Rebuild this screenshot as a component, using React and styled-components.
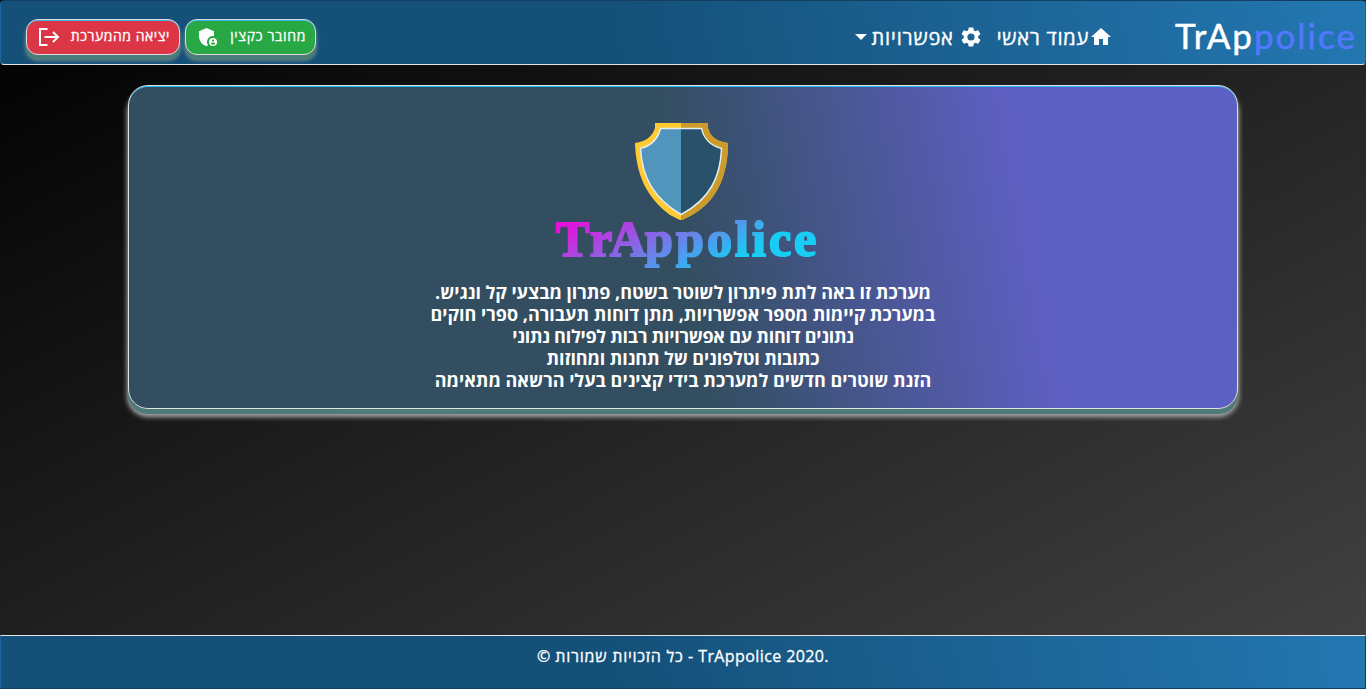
import React from "react";
import styled, { createGlobalStyle } from "styled-components";

const Global = createGlobalStyle`
  * { box-sizing: border-box; }
  html, body { margin: 0; height: 100%; }
  body {
    background: #000;
    color: #fff;
    font-family: "Open Sans", "Liberation Sans", sans-serif;
    overflow: hidden;
  }
`;

const Page = styled.div`
  height: 100vh;
  display: flex;
  flex-direction: column;
  background: linear-gradient(to bottom right, #000, #434343);
`;

const Header = styled.header`
  display: flex;
  justify-content: space-between;
  height: 65px;
  padding: 0 10px 0 25px;
  border: 1px solid #dfe5ea;
  border-top-color: #123f5f;
  border-left-color: #1d659a;
  border-right-color: #1d659a;
  border-radius: 4px;
  background: linear-gradient(80deg, #145078 45%, #2376b0 98%);
`;

const Actions = styled.div`
  display: flex;
  gap: 5px;
  padding-top: 18px;
`;

const ActionButton = styled.button`
  display: flex;
  align-items: center;
  justify-content: space-between;
  width: ${(p) => p.$width}px;
  height: 36px;
  padding: 0 9px 0 ${(p) => p.$left}px;
  border: 1px solid #dcdcdc;
  border-radius: 12px;
  background: ${(p) => p.$color};
  color: #fff;
  box-shadow: inset 0 1px 0 #35b4ec, 0 5px 0 #4d7c78, 0 5px 4px #8b9a9a;
  font: 14px "Open Sans", sans-serif;
`;

const ButtonText = styled.span`
  direction: rtl;
  white-space: nowrap;
  padding-bottom: 3px;
  letter-spacing: ${(p) => p.$spacing || 0}px;
  -webkit-text-stroke: 0.3px #fff;
`;

const Navigation = styled.nav`
  direction: rtl;
  display: flex;
  height: 63px;
`;

const Brand = styled.div`
  direction: ltr;
  width: 180px;
  margin-left: 62px;
  padding-top: 10px;
  font: 35px/48px Lato, sans-serif;
  letter-spacing: 2px;
  white-space: nowrap;
  -webkit-text-stroke: 0.5px currentColor;
  span { color: #5378ff; }
`;

const NavItem = styled.a`
  display: flex;
  align-items: center;
  height: 24px;
  margin-top: 24px;
  margin-left: ${(p) => p.$after || 0}px;
  gap: ${(p) => p.$gap || 0}px;
  font-size: 20px;
  line-height: 24px;
  white-space: nowrap;
  svg { flex: none; }
`;

const NavText = styled.span`
  padding-top: 2px;
  letter-spacing: ${(p) => p.$spacing || 0}px;
  -webkit-text-stroke: 0.4px #fff;
`;

const Caret = styled.span`
  border: 6px solid transparent;
  border-top-color: #fff;
  border-bottom: 0;
`;

const Main = styled.main`
  flex: 1;
  padding: 20px 128px;
`;

const Panel = styled.section`
  display: flex;
  flex-direction: column;
  align-items: center;
  height: 324px;
  padding-top: 33px;
  border: 1px solid #e2e2e2;
  border-radius: 20px;
  background: linear-gradient(80deg, #334e60 50%, #5e5fc2 80%);
  box-shadow: inset 0 1px 0 #26b5f4, 0 5px 0 #4d7c78, 0 7px 5px 1px #aaa;
`;

const Intro = styled.div`
  direction: rtl;
  padding-top: 8px;
  text-align: center;
  font-size: 18px;
  font-weight: 700;
  line-height: 22px;
`;

const Line = styled.div`
  white-space: nowrap;
  letter-spacing: ${(p) => p.$spacing || 0}px;
`;

const Footer = styled.footer`
  height: 54px;
  padding-top: 8px;
  border: 1px solid #e5e5e5;
  border-bottom-color: #123f5f;
  border-left-color: #1d659a;
  border-right-color: #123f5f;
  background: linear-gradient(80deg, #145078 45%, #2376b0 98%);
  text-align: center;
  font-size: 16px;
  line-height: 24px;
  letter-spacing: 0.4px;
  -webkit-text-stroke: 0.3px #fff;
`;

const Rights = styled.bdi`
  letter-spacing: 0.75px;
`;

const Icon = ({ d, size = 24 }) => (
  <svg width={size} height={size} viewBox="0 0 24 24" fill="#fff"><path d={d} fillRule="evenodd" /></svg>
);

const HOME = "M10 20v-6h4v6h5v-8h3L12 3 2 12h3v8z";
const GEAR = "M19.14 12.94c.04-.3.06-.61.06-.94 0-.32-.02-.64-.07-.94l2.03-1.58a.49.49 0 0 0 .12-.61l-1.92-3.32a.49.49 0 0 0-.59-.22l-2.39.96a7 7 0 0 0-1.62-.94l-.36-2.54a.48.48 0 0 0-.48-.41h-3.84a.47.47 0 0 0-.47.41l-.36 2.54c-.59.24-1.13.57-1.62.94l-2.39-.96a.48.48 0 0 0-.59.22L2.74 8.87a.48.48 0 0 0 .12.61l2.03 1.58c-.05.3-.09.63-.09.94s.02.64.07.94l-2.03 1.58a.49.49 0 0 0-.12.61l1.92 3.32c.12.22.37.29.59.22l2.39-.96c.5.38 1.03.7 1.62.94l.36 2.54c.05.24.24.41.48.41h3.84c.24 0 .44-.17.47-.41l.36-2.54a6.8 6.8 0 0 0 1.62-.94l2.39.96c.22.08.47 0 .59-.22l1.92-3.32a.48.48 0 0 0-.12-.61zM12 15.6a3.6 3.6 0 1 1 0-7.2 3.6 3.6 0 0 1 0 7.2z";
const SHIELD = "M17 11c.34 0 .67.04 1 .09V6.27L10.5 3 3 6.27v4.91c0 4.54 3.2 8.79 7.5 9.82.55-.13 1.08-.32 1.6-.55A6 6 0 0 1 17 11zM17 13a4 4 0 1 0 0 8 4 4 0 0 0 0-8zm0 1.38a1.12 1.12 0 1 1 0 2.24 1.12 1.12 0 0 1 0-2.24zm0 5.37c-.93 0-1.74-.46-2.24-1.17.05-.72 1.51-1.08 2.24-1.08s2.19.36 2.24 1.08A2.7 2.7 0 0 1 17 19.75z";

const LogoutIcon = () => (
  <svg width="22" height="20" viewBox="0 0 22 20" fill="none" stroke="#fff" strokeWidth="2">
    <path d="M9.500 2H2v16h7.500M6.500 10H20M15 5l5 5-5 5" />
  </svg>
);

const Logo = () => (
  <svg width="270" height="154" viewBox="548 119 270 154">
    <defs>
      <linearGradient id="word" gradientUnits="userSpaceOnUse" x1="572" y1="222" x2="623" y2="318">
        <stop offset="0" stopColor="#e412da" />
        <stop offset=".5" stopColor="#816de6" />
        <stop offset="1" stopColor="#18ccf3" />
      </linearGradient>
      <clipPath id="right"><path d="M681 119h55v110h-55z" /></clipPath>
    </defs>
    <path d="M655 123h53v5q3 13 20 15c0 29-9 57-36 72l-10 5h-2l-10-5c-24-18-34-41-35-72q16-2 20-15z" fill="#ffca32" />
    <path d="M655 123h53v5q3 13 20 15c0 29-9 57-36 72l-10 5h-2l-10-5c-24-18-34-41-35-72q16-2 20-15z" fill="#cd9b2c" clipPath="url(#right)" />
    <path d="M660.500 128.500h41q3 16 20 20c-1 29-12 51-40.500 66-27-16-39-37-40.500-66q16-4 20-20z" fill="#5195bd" stroke="#e5edf1" strokeWidth="1.500" />
    <path d="M681 129.500h20q4 15 19.500 19.500c-1 27-11 49-39.500 64.500z" fill="#29516b" />
    <text x="556 590 610 645 676 707 735 752 769 794" y="255.500" fontFamily="Liberation Serif, serif" fontWeight="700" fontSize="50" fill="url(#word)" stroke="url(#word)" strokeWidth="2">TrAppolice</text>
  </svg>
);

export default function App() {
  return (
    <>
      <Global />
      <Page>
        <Header>
          <Actions>
            <ActionButton $width={154} $left={11} $color="#dc3545">
              <LogoutIcon /><ButtonText $spacing={0.54}>יציאה מהמערכת</ButtonText>
            </ActionButton>
            <ActionButton $width={131} $left={10} $color="#28a745">
              <Icon d={SHIELD} /><ButtonText $spacing={0.64}>מחובר כקצין</ButtonText>
            </ActionButton>
          </Actions>
          <Navigation>
            <Brand>TrAp<span>police</span></Brand>
            <NavItem $after={14}><Icon d={HOME} /><NavText $spacing={0.78}>עמוד ראשי</NavText></NavItem>
            <NavItem $gap={5}><Icon d={GEAR} /><NavText $spacing={0.85}>אפשרויות</NavText><Caret /></NavItem>
          </Navigation>
        </Header>
        <Main>
          <Panel>
            <Logo />
            <Intro>
              <Line $spacing={-0.03}>מערכת זו באה לתת פיתרון לשוטר בשטח, פתרון מבצעי קל ונגיש.</Line>
              <Line>במערכת קיימות מספר אפשרויות, מתן דוחות תעבורה, ספרי חוקים</Line>
              <Line $spacing={-0.26}>נתונים דוחות עם אפשרויות רבות לפילוח נתוני</Line>
              <Line $spacing={-0.12}>כתובות וטלפונים של תחנות ומחוזות</Line>
              <Line>הזנת שוטרים חדשים למערכת בידי קצינים בעלי הרשאה מתאימה</Line>
            </Intro>
          </Panel>
        </Main>
        <Footer>© <Rights dir="rtl">כל הזכויות שמורות</Rights> - TrAppolice 2020.</Footer>
      </Page>
    </>
  );
}
